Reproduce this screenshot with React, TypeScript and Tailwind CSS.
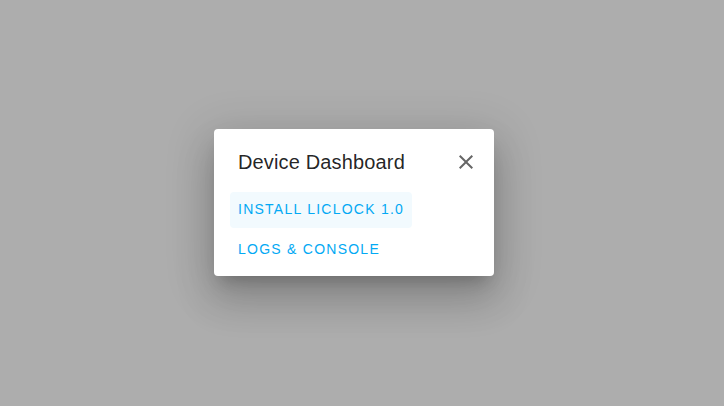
import React from "react";

export default function App() {
  return (
    <div className="flex h-[406px] w-[724px] items-center justify-center bg-[#adadad] pb-[2px] pr-[16px] font-['Liberation_Sans',Arial,sans-serif]">
      <div className="flex w-[280px] flex-col rounded-[4px] bg-white pb-[8px] shadow-[0_11px_15px_-7px_rgba(0,0,0,0.2),0_24px_38px_3px_rgba(0,0,0,0.14),0_9px_46px_8px_rgba(0,0,0,0.12)]">
        <div className="flex h-[63px] items-start justify-between pl-[24px] pr-[16px] pt-[20px]">
          <span className="text-[20px] leading-[26px] tracking-[0.15px] text-[rgba(0,0,0,0.87)]">
            Device Dashboard
          </span>
          <svg width="24" height="24" viewBox="0 0 24 24" className="mt-[1px] fill-[#666]">
            <path d="M19 6.41 17.59 5 12 10.59 6.41 5 5 6.41 10.59 12 5 17.59 6.41 19 12 13.41 17.59 19 19 17.59 13.41 12z" />
          </svg>
        </div>
        <div className="flex flex-col items-start gap-[4px] px-[16px]">
          <button className="h-[36px] rounded-[4px] bg-[#f2fafe] px-[8px] text-[14px] font-medium uppercase tracking-[1.25px] text-[#03a9f4]">
            Install LiClock 1.0
          </button>
          <button className="h-[36px] rounded-[4px] px-[8px] text-[14px] font-medium uppercase tracking-[1.25px] text-[#03a9f4]">
            Logs &amp; Console
          </button>
        </div>
      </div>
    </div>
  );
}
